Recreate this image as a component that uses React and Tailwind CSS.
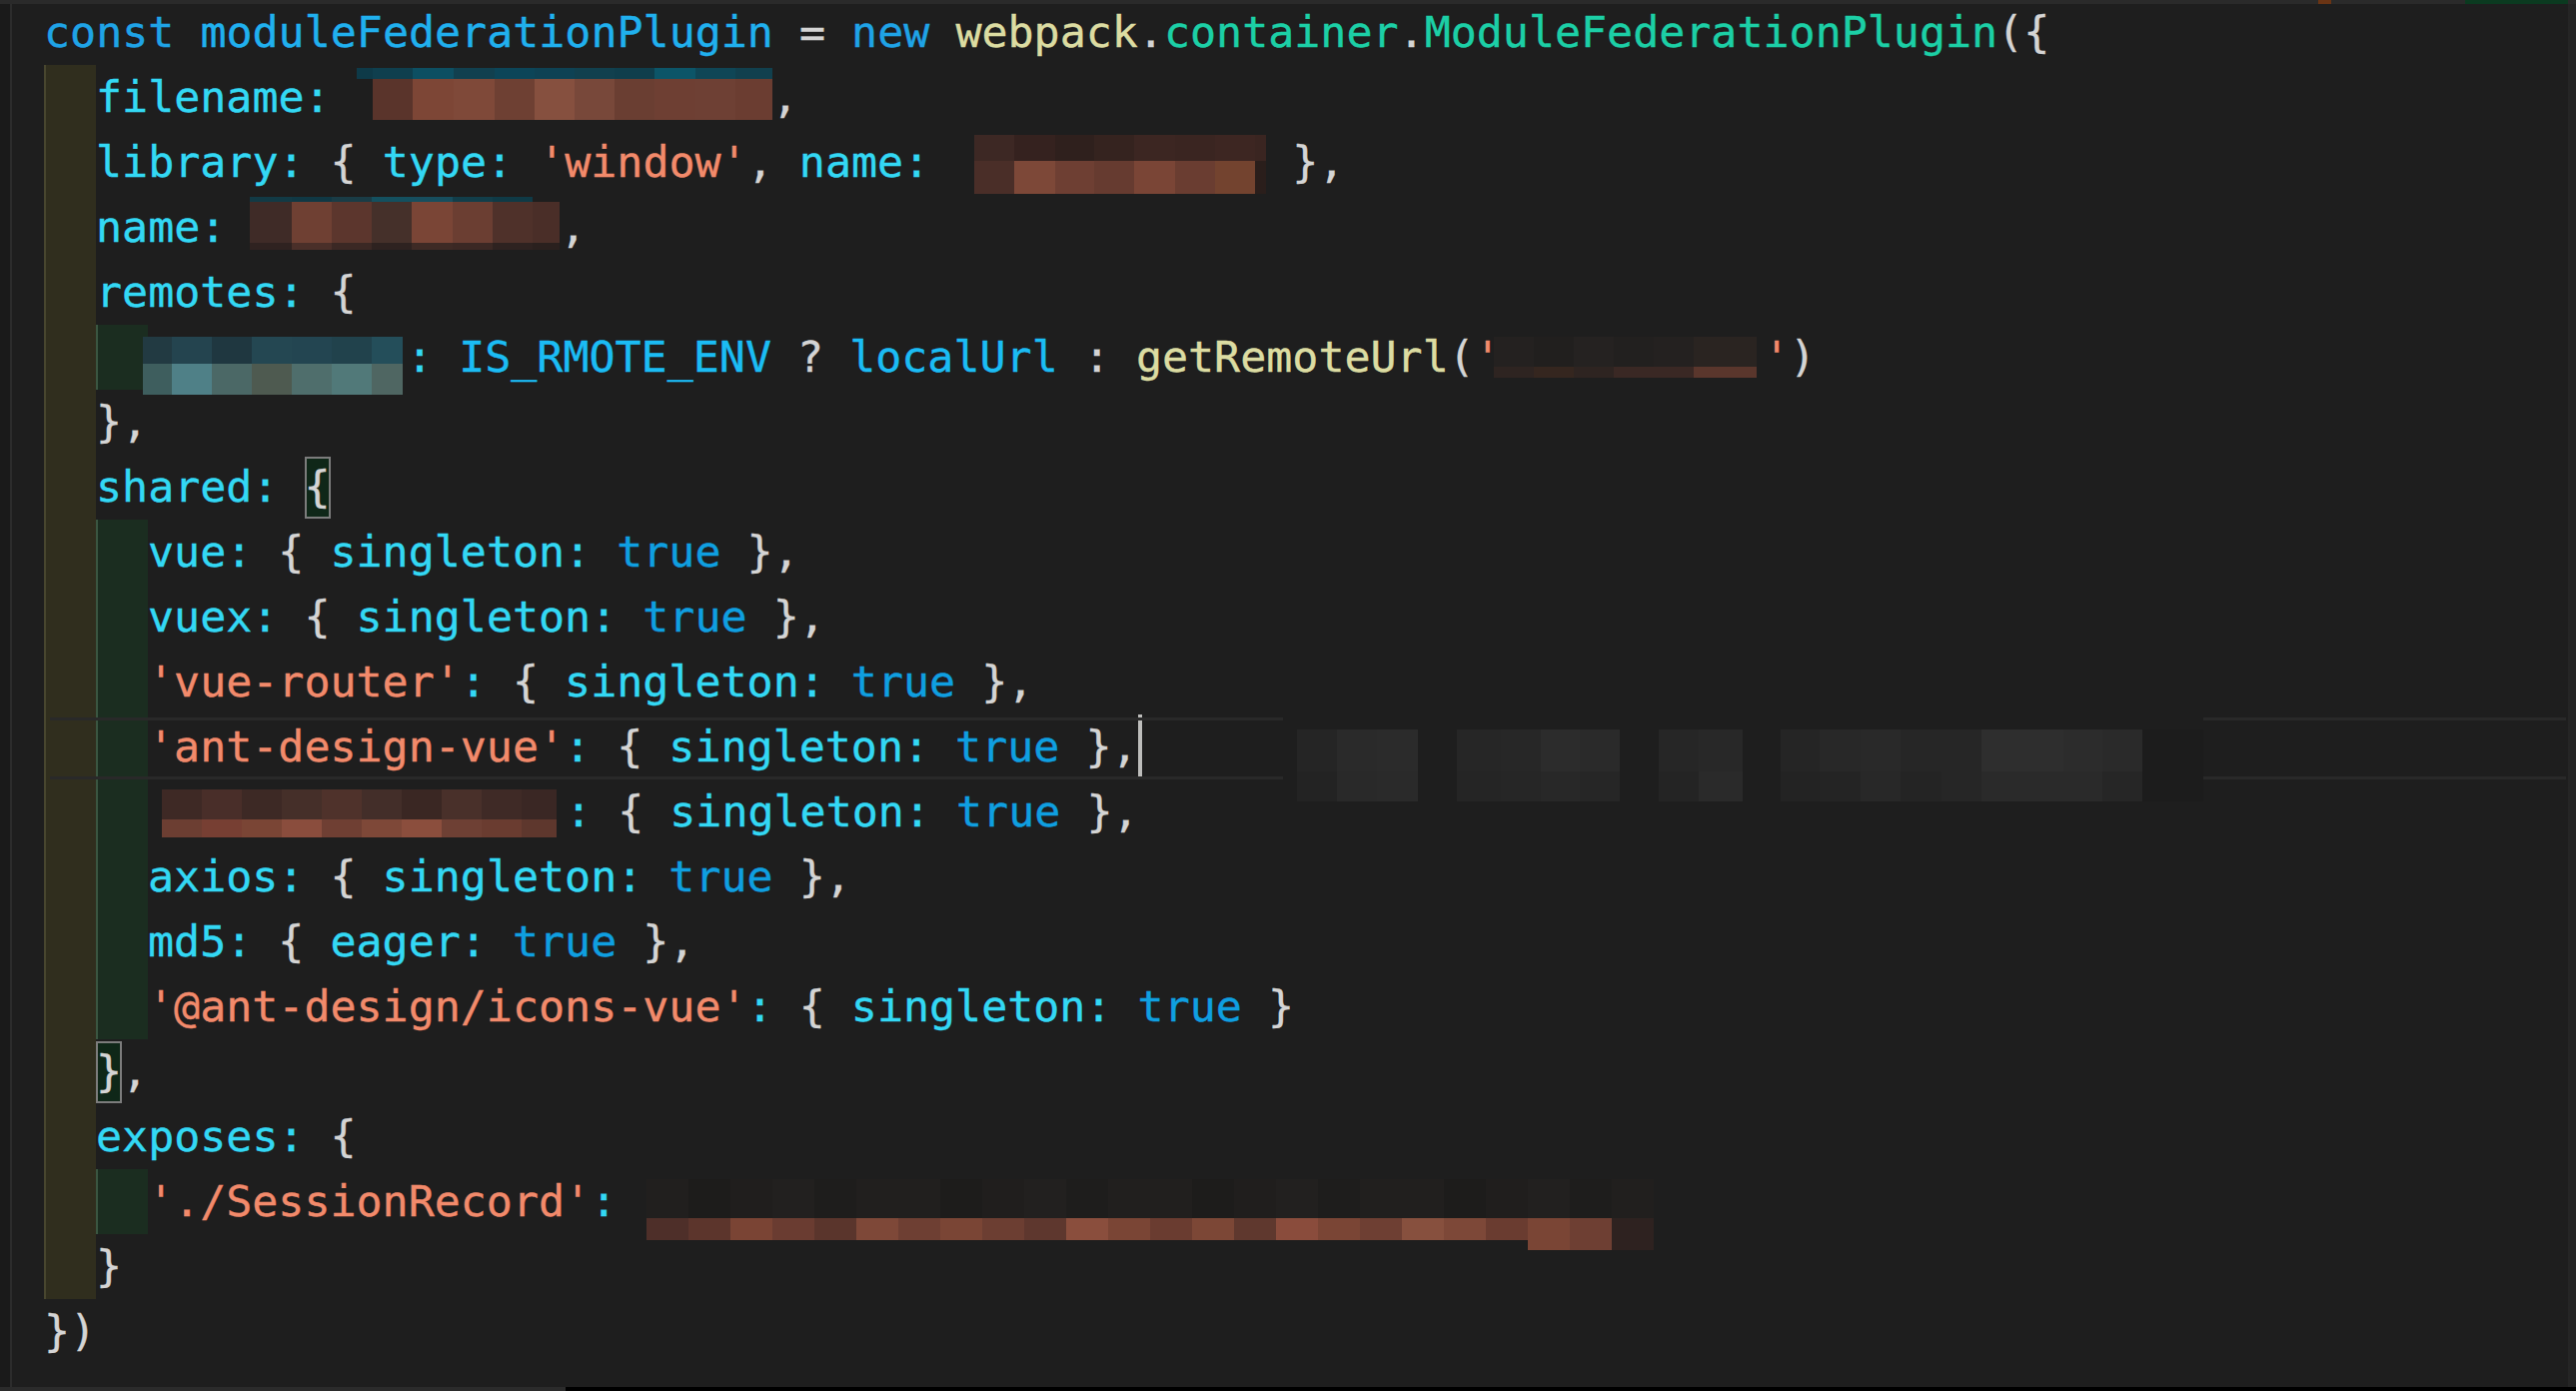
const P = 'text-[#d4d4d4]'
const K = 'text-[#1fa3e6]'
const V = 'text-[#20b0ee]'
const Y = 'text-[#dcdca2]'
const G = 'text-[#1ccfa6]'
const C = 'text-[#33d8f4]'
const S = 'text-[#f28a6b]'
const B = 'text-[#0f9fe0]'
const E = 'text-[#1bbcf4]'

const cells = (xs, y, h, colors) => colors.map((c, i) => [xs[i], y, xs[i + 1] - xs[i], h, c])

function Mosaic({ w, h, rects, className = '' }) {
  return (
    <svg width={w} height={h} className={`shrink-0 self-start overflow-visible ${className}`}>
      {rects.map(([x, y, rw, rh, c], i) => (
        <rect key={i} x={x} y={y} width={rw} height={rh} fill={c} />
      ))}
    </svg>
  )
}

function Line({ level = 0, children, className = '' }) {
  return (
    <div className={`flex h-[65px] items-center whitespace-pre ${className}`}>
      {level >= 1 && <div className="w-[52px] shrink-0 self-stretch border-l-2 border-[#48462f] bg-[#302e1e]" />}
      {level >= 2 && <div className="w-[52px] shrink-0 self-stretch border-l-2 border-[#3a5641] bg-[#1b2d20]" />}
      {children}
    </div>
  )
}

function Match({ children }) {
  return (
    <span className="inline-flex h-[62px] w-[26px] shrink-0 items-center justify-center bg-[#0f2718] text-[#d4d4d4] shadow-[inset_0_0_0_2px_#7c7c7c]">
      {children}
    </span>
  )
}

function T({ c, children, className = '' }) {
  return <span className={`${c} ${className}`}>{children}</span>
}

// redacted blocks
const blockA = [
  ...cells([0, 16, 56, 97, 138, 178, 218, 258, 298, 339, 379, 416], 3, 11,
    ['#0e3a48', '#0f3f4e', '#0d4f62', '#11404f', '#0c4558', '#0e4254', '#11404e', '#0f3e4c', '#0c5568', '#0f4656', '#11404e']),
  ...cells([16, 56, 97, 138, 178, 218, 258, 298, 339, 379, 416], 14, 41,
    ['#5a342b', '#7d4636', '#7f4939', '#6e4033', '#86503f', '#78483a', '#6a3e32', '#6e3f33', '#6e4034', '#6b3d31']),
]

const blockB = [
  ...cells([0, 40, 81, 120, 160, 201, 241, 281, 292], 5, 26,
    ['#3d2824', '#35221f', '#2f201d', '#35231f', '#3c2622', '#3a2521', '#3d2622', '#3a2521']),
  ...cells([0, 40, 81, 120, 160, 201, 241, 281, 292], 31, 33,
    ['#4a2e28', '#7d4838', '#6e3f33', '#663b30', '#7a4536', '#6a3d31', '#73432f', '#2a1e1b']),
]

const blockC = [
  ...cells([0, 42, 82, 122, 162, 203, 243, 283], 2, 5,
    ['#123a45', '#103844', '#1a3c46', '#14505f', '#174e5e', '#123e4a', '#0f3a46']),
  ...cells([0, 42, 82, 122, 162, 203, 243, 283, 310], 7, 41,
    ['#3f2b27', '#6f4033', '#5c362d', '#45302a', '#7a4536', '#6b3e32', '#4f312a', '#4a2e28']),
  ...cells([0, 42, 82, 122, 162, 203, 243, 283, 310], 48, 7,
    ['#2f2220', '#4a2f29', '#3b2824', '#2e2220', '#3e2a25', '#3b2824', '#2e2220', '#2a201e']),
]

const blockD = [
  ...cells([0, 29, 69, 109, 149, 189, 229, 260], 12, 27,
    ['#223a42', '#24444f', '#1f3740', '#244752', '#234551', '#21424c', '#244e5a']),
  ...cells([0, 29, 69, 109, 149, 189, 229, 260], 39, 31,
    ['#3e5e5e', '#4f8087', '#4b6866', '#4e5a50', '#4f6e6c', '#517979', '#4f6662']),
]

const blockE = [
  ...cells([0, 40, 80, 120, 160, 200, 263], 12, 30,
    ['#242120', '#211f1e', '#252221', '#22201f', '#242120', '#2a2421']),
  ...cells([0, 40, 80, 120, 160, 200, 263], 42, 11,
    ['#2e2421', '#35261f', '#2e2421', '#3a2824', '#3a2824', '#5a362c']),
]

const blockF = [
  ...cells([0, 40, 80, 120, 160, 200, 240, 280, 320, 360, 395], 10, 30,
    ['#3e2925', '#492e29', '#3d2925', '#452f29', '#4f322b', '#432e29', '#3a2723', '#49302a', '#3f2a26', '#3a2724']),
  ...cells([0, 40, 80, 120, 160, 200, 240, 280, 320, 360, 395], 40, 18,
    ['#6c3e32', '#773f33', '#7a4535', '#8a4d3d', '#6f3f33', '#7e4838', '#8b4e3d', '#6e4034', '#6a3c30', '#5e372d']),
]

const gBright = ['#4e2f29', '#5c352c', '#7a4434', '#6a3c31', '#5a352c', '#7e4838', '#6e3f33', '#7a4535', '#6c3e32', '#5e372e', '#8a4e3d', '#7a4535',
  '#6a3c30', '#7c4736', '#5f382e', '#8a4c3c', '#7a4535', '#6e3f33', '#87503e', '#7d4838', '#6a3c30', '#7a4535', '#6e3f33', '#2e2220']
const gFaint = ['#211f1e', '#1d1c1b', '#201e1d', '#22201f', '#1e1d1c', '#211f1e']
const blockG = [
  ...gBright.map((c, i) => [i * 42, 10, 42, 39, gFaint[i % gFaint.length]]),
  ...gBright.map((c, i) => [i * 42, 49, 42, i >= 21 ? 32 : 22, c]),
]

const blob = [
  [0, 0, 921, 87, '#1e1e1e'],
  ...cells([14, 54, 94, 135], 15, 42, ['#252525', '#2a2a2a', '#2b2b2b']),
  ...cells([14, 54, 94, 135], 57, 30, ['#232323', '#292929', '#2a2a2a']),
  ...cells([174, 218, 258, 297, 337], 15, 42, ['#262626', '#272727', '#2c2c2c', '#2a2a2a']),
  ...cells([174, 218, 258, 297, 337], 57, 30, ['#252525', '#262626', '#282828', '#262626']),
  ...cells([376, 416, 460], 15, 42, ['#262626', '#282828']),
  ...cells([376, 416, 460], 57, 30, ['#242424', '#2a2a2a']),
  ...cells([498, 537, 578, 618, 659, 699, 781, 820, 860], 15, 42,
    ['#252525', '#282828', '#292929', '#262626', '#262626', '#2e2e2e', '#2c2c2c', '#2a2a2a']),
  ...cells([498, 537, 578, 618, 659, 699, 781, 820, 860], 57, 30,
    ['#232323', '#242424', '#282828', '#242424', '#262626', '#2a2a2a', '#2a2a2a', '#262626']),
  [860, 15, 61, 72, '#1c1c1c'],
]

function Singleton({ eager = false, last = false }) {
  return (
    <>
      <T c={P}>{' { '}</T>
      <T c={C}>{eager ? 'eager:' : 'singleton:'}</T>
      <T c={P}> </T>
      <T c={B}>true</T>
      <T c={P}>{last ? ' }' : ' },'}</T>
    </>
  )
}

export default function App() {
  return (
    <div className="relative flex h-[1392px] w-[2578px] flex-col overflow-hidden bg-[#1e1e1e] font-['DejaVu_Sans_Mono',monospace] text-[43.3px] [-webkit-text-stroke:0.4px]">
      <div className="absolute left-0 right-0 top-0 z-20 flex h-[4px] bg-[#2a2a2a]">
        <div className="ml-[2320px] w-[13px] bg-[#6a3414]" />
        <div className="ml-[134px] w-[103px] bg-[#0b3a20]" />
      </div>

      <div className="flex min-h-0 flex-1">
        <div className="w-[10px] shrink-0 bg-[#1a1a1a]" />
        <div className="w-[2px] shrink-0 bg-[#2c2c2c]" />

        <div className="flex-1 pl-[32px]">
          <Line>
            <T c={K}>const</T>
            <T c={P}> </T>
            <T c={V}>moduleFederationPlugin</T>
            <T c={P}>{' = '}</T>
            <T c={K}>new</T>
            <T c={P}> </T>
            <T c={Y}>webpack</T>
            <T c={P}>.</T>
            <T c={G}>container</T>
            <T c={P}>.</T>
            <T c={G}>ModuleFederationPlugin</T>
            <T c={P}>{'({'}</T>
          </Line>

          <Line level={1}>
            <T c={C}>filename:</T>
            <T c={P}> </T>
            <Mosaic w={416} h={55} rects={blockA} />
            <T c={P}>,</T>
          </Line>

          <Line level={1}>
            <T c={C}>library:</T>
            <T c={P}>{' { '}</T>
            <T c={C}>type:</T>
            <T c={P}> </T>
            <T c={S}>'window'</T>
            <T c={P}>{', '}</T>
            <T c={C}>name:</T>
            <T c={P}> </T>
            <Mosaic w={292} h={64} rects={blockB} className="ml-[19px]" />
            <T c={P}>{' },'}</T>
          </Line>

          <Line level={1}>
            <T c={C}>name:</T>
            <T c={P}> </T>
            <Mosaic w={310} h={55} rects={blockC} className="-ml-[2px]" />
            <T c={P}>,</T>
          </Line>

          <Line level={1}>
            <T c={C}>remotes:</T>
            <T c={P}>{' {'}</T>
          </Line>

          <Line level={2}>
            <Mosaic w={260} h={70} rects={blockD} className="-ml-[5px] mr-[4px]" />
            <T c={C}>:</T>
            <T c={P}> </T>
            <T c={E}>IS_RMOTE_ENV</T>
            <T c={P}>{' ? '}</T>
            <T c={E}>localUrl</T>
            <T c={P}>{' : '}</T>
            <T c={Y}>getRemoteUrl</T>
            <T c={P}>(</T>
            <T c={S}>'</T>
            <Mosaic w={263} h={53} rects={blockE} className="-ml-[7px]" />
            <T c={S} className="ml-[7px]">'</T>
            <T c={P}>)</T>
          </Line>

          <Line level={1}>
            <T c={P}>{'},'}</T>
          </Line>

          <Line level={1}>
            <T c={C}>shared:</T>
            <T c={P}> </T>
            <Match>{'{'}</Match>
          </Line>

          <Line level={2}>
            <T c={C}>vue:</T>
            <Singleton />
          </Line>

          <Line level={2}>
            <T c={C}>vuex:</T>
            <Singleton />
          </Line>

          <Line level={2}>
            <T c={S}>'vue-router'</T>
            <T c={C}>:</T>
            <Singleton />
          </Line>

          <Line level={2} className="relative">
            <div className="absolute left-[6px] right-[2px] top-[3px] h-[3px] bg-[#292929]" />
            <div className="absolute bottom-0 left-[6px] right-[2px] h-[3px] bg-[#292929]" />
            <T c={S}>'ant-design-vue'</T>
            <T c={C}>:</T>
            <Singleton />
            <div className="h-[65px] w-[4px] shrink-0 bg-[#bdbdbb]" />
            <Mosaic w={921} h={87} rects={blob} className="relative z-10 ml-[141px]" />
          </Line>

          <Line level={2}>
            <Mosaic w={395} h={58} rects={blockF} className="ml-[14px] mr-[9px]" />
            <T c={C}>:</T>
            <Singleton />
          </Line>

          <Line level={2}>
            <T c={C}>axios:</T>
            <Singleton />
          </Line>

          <Line level={2}>
            <T c={C}>md5:</T>
            <Singleton eager />
          </Line>

          <Line level={2}>
            <T c={S}>'@ant-design/icons-vue'</T>
            <T c={C}>:</T>
            <Singleton last />
          </Line>

          <Line level={1}>
            <Match>{'}'}</Match>
            <T c={P}>,</T>
          </Line>

          <Line level={1}>
            <T c={C}>exposes:</T>
            <T c={P}>{' {'}</T>
          </Line>

          <Line level={2}>
            <T c={S}>'./SessionRecord'</T>
            <T c={C}>:</T>
            <Mosaic w={1008} h={81} rects={blockG} className="ml-[30px]" />
          </Line>

          <Line level={1}>
            <T c={P}>{'}'}</T>
          </Line>

          <Line>
            <T c={P}>{'})'}</T>
          </Line>
        </div>

        <div className="w-[8px] shrink-0 bg-[#252525]" />
      </div>

      <div className="flex h-[4px] shrink-0">
        <div className="w-[566px] bg-[#2b2b2b]" />
        <div className="flex-1 bg-black" />
      </div>
    </div>
  )
}
